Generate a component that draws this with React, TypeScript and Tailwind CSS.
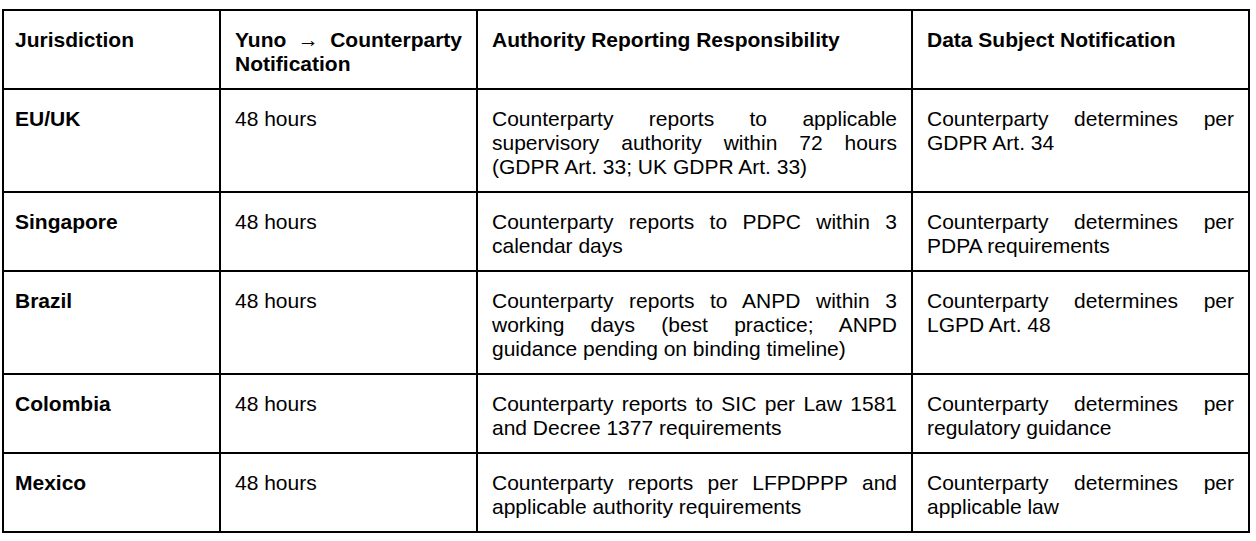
import React from "react";

type Row = { j: string; y: string; a: string; d: string };

const rows: Row[] = [
  {
    j: "EU/UK",
    y: "48 hours",
    a: "Counterparty reports to applicable supervisory authority within 72 hours (GDPR Art. 33; UK GDPR Art. 33)",
    d: "Counterparty determines per GDPR Art. 34",
  },
  {
    j: "Singapore",
    y: "48 hours",
    a: "Counterparty reports to PDPC within 3 calendar days",
    d: "Counterparty determines per PDPA requirements",
  },
  {
    j: "Brazil",
    y: "48 hours",
    a: "Counterparty reports to ANPD within 3 working days (best practice; ANPD guidance pending on binding timeline)",
    d: "Counterparty determines per LGPD Art. 48",
  },
  {
    j: "Colombia",
    y: "48 hours",
    a: "Counterparty reports to SIC per Law 1581 and Decree 1377 requirements",
    d: "Counterparty determines per regulatory guidance",
  },
  {
    j: "Mexico",
    y: "48 hours",
    a: "Counterparty reports per LFPDPPP and applicable authority requirements",
    d: "Counterparty determines per applicable law",
  },
];

const cell =
  "border-r-2 border-b-2 border-black pt-[17px] pb-[12px] pr-[14px] text-justify";

export default function App() {
  return (
    <div className="w-[1256px] h-[541px] bg-white pt-[9px] pl-[2px] font-['Liberation_Sans',Arial,sans-serif] text-[21px] leading-[normal] text-black">
      <div className="grid w-[1248px] grid-cols-[217px_257px_435px_337px] border-l-2 border-t-2 border-black">
        <div className={`${cell} pl-[11px] font-bold`}>Jurisdiction</div>
        <div className={`${cell} pl-[14px] font-bold`}>Yuno → Counterparty Notification</div>
        <div className={`${cell} pl-[14px] font-bold`}>Authority Reporting Responsibility</div>
        <div className={`${cell} pl-[14px] font-bold`}>Data Subject Notification</div>
        {rows.map((r) => (
          <React.Fragment key={r.j}>
            <div className={`${cell} pl-[11px] font-bold`}>{r.j}</div>
            <div className={`${cell} pl-[14px]`}>{r.y}</div>
            <div className={`${cell} pl-[14px]`}>{r.a}</div>
            <div className={`${cell} pl-[14px]`}>{r.d}</div>
          </React.Fragment>
        ))}
      </div>
    </div>
  );
}
